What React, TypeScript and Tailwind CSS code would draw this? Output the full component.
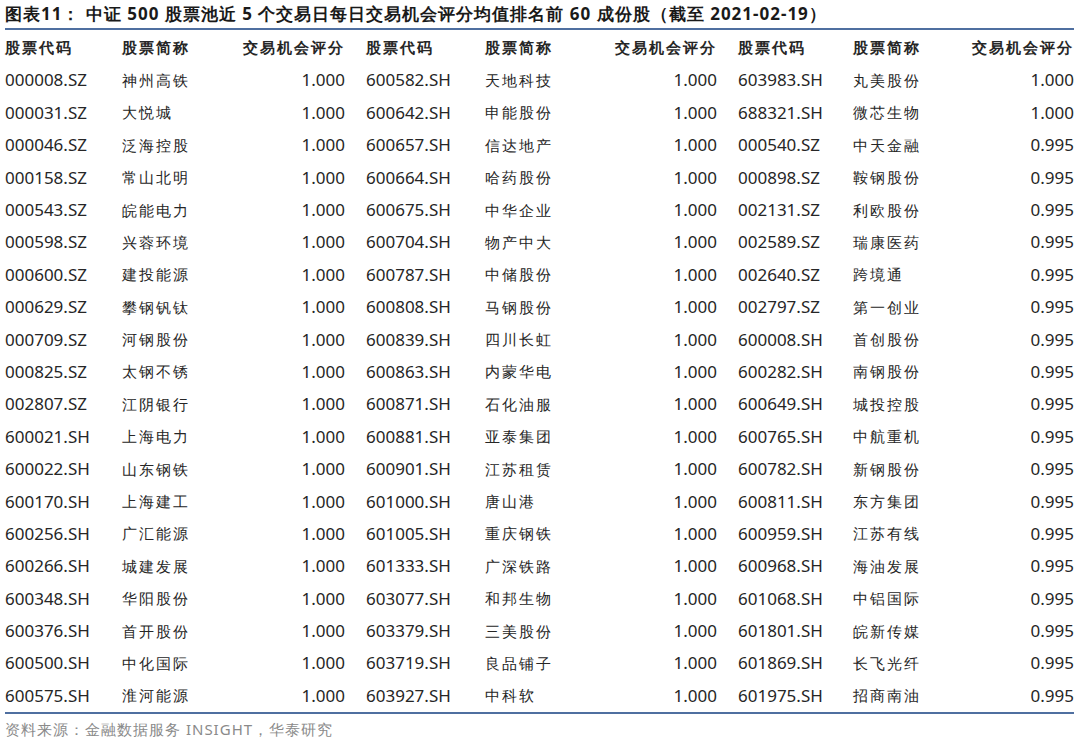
const rows: [string, string, string, string, string, string, string, string, string][] = [
  ["000008.SZ", "神州高铁", "1.000", "600582.SH", "天地科技", "1.000", "603983.SH", "丸美股份", "1.000"],
  ["000031.SZ", "大悦城", "1.000", "600642.SH", "申能股份", "1.000", "688321.SH", "微芯生物", "1.000"],
  ["000046.SZ", "泛海控股", "1.000", "600657.SH", "信达地产", "1.000", "000540.SZ", "中天金融", "0.995"],
  ["000158.SZ", "常山北明", "1.000", "600664.SH", "哈药股份", "1.000", "000898.SZ", "鞍钢股份", "0.995"],
  ["000543.SZ", "皖能电力", "1.000", "600675.SH", "中华企业", "1.000", "002131.SZ", "利欧股份", "0.995"],
  ["000598.SZ", "兴蓉环境", "1.000", "600704.SH", "物产中大", "1.000", "002589.SZ", "瑞康医药", "0.995"],
  ["000600.SZ", "建投能源", "1.000", "600787.SH", "中储股份", "1.000", "002640.SZ", "跨境通", "0.995"],
  ["000629.SZ", "攀钢钒钛", "1.000", "600808.SH", "马钢股份", "1.000", "002797.SZ", "第一创业", "0.995"],
  ["000709.SZ", "河钢股份", "1.000", "600839.SH", "四川长虹", "1.000", "600008.SH", "首创股份", "0.995"],
  ["000825.SZ", "太钢不锈", "1.000", "600863.SH", "内蒙华电", "1.000", "600282.SH", "南钢股份", "0.995"],
  ["002807.SZ", "江阴银行", "1.000", "600871.SH", "石化油服", "1.000", "600649.SH", "城投控股", "0.995"],
  ["600021.SH", "上海电力", "1.000", "600881.SH", "亚泰集团", "1.000", "600765.SH", "中航重机", "0.995"],
  ["600022.SH", "山东钢铁", "1.000", "600901.SH", "江苏租赁", "1.000", "600782.SH", "新钢股份", "0.995"],
  ["600170.SH", "上海建工", "1.000", "601000.SH", "唐山港", "1.000", "600811.SH", "东方集团", "0.995"],
  ["600256.SH", "广汇能源", "1.000", "601005.SH", "重庆钢铁", "1.000", "600959.SH", "江苏有线", "0.995"],
  ["600266.SH", "城建发展", "1.000", "601333.SH", "广深铁路", "1.000", "600968.SH", "海油发展", "0.995"],
  ["600348.SH", "华阳股份", "1.000", "603077.SH", "和邦生物", "1.000", "601068.SH", "中铝国际", "0.995"],
  ["600376.SH", "首开股份", "1.000", "603379.SH", "三美股份", "1.000", "601801.SH", "皖新传媒", "0.995"],
  ["600500.SH", "中化国际", "1.000", "603719.SH", "良品铺子", "1.000", "601869.SH", "长飞光纤", "0.995"],
  ["600575.SH", "淮河能源", "1.000", "603927.SH", "中科软", "1.000", "601975.SH", "招商南油", "0.995"],
];

const headers = ["股票代码", "股票简称", "交易机会评分", "股票代码", "股票简称", "交易机会评分", "股票代码", "股票简称", "交易机会评分"];

const grid =
  "grid grid-cols-[117px_105px_118px_140px_110px_122px_136px_105px_116px] items-center";
const cjk = "font-[family-name:'Noto_Sans_CJK_SC',serif] text-[15px] tracking-[2px]";
const num = "font-[family-name:'Liberation_Sans',sans-serif] text-[17px]";

function cellClass(i: number, head = false) {
  const pos = i % 3;
  const pad = i === 3 || i === 6 ? " pl-[21px]" : "";
  if (head) return `${cjk} font-bold${pos === 2 ? " text-right" : ""}${pad}`;
  if (pos === 1) return cjk;
  if (pos === 2) return `${num} text-right`;
  return `${num}${pad}`;
}

export default function App() {
  return (
    <div className="h-[743px] w-[1080px] bg-white pl-[5px] text-[#262626]">
      <div className="flex h-[30px] w-[1069px] items-end border-b-2 border-[#4f6fa0] pb-[2px] font-[family-name:'Liberation_Sans','Noto_Sans_CJK_SC',sans-serif] text-[17px] font-bold tracking-[1px] text-[#1a1a1a]">
        图表11：&nbsp;中证 500 股票池近 5 个交易日每日交易机会评分均值排名前 60 成份股（截至 2021-02-19）
      </div>
      <div className={`${grid} h-[34px]`}>
        {headers.map((h, i) => (
          <div key={i} className={cellClass(i, true)}>{h}</div>
        ))}
      </div>
      {rows.map((r, ri) => (
        <div key={ri} className={`${grid} h-[32.4px]`}>
          {r.map((c, i) => (
            <div key={i} className={cellClass(i)}>{c}</div>
          ))}
        </div>
      ))}
      <div className="w-[1069px] border-t-2 border-[#4f6fa0]" />
      <div className="mt-[4px] font-[family-name:'Liberation_Sans','Noto_Sans_CJK_SC',sans-serif] text-[15px] tracking-[1px] text-[#8a8a8a]">
        资料来源：金融数据服务 INSIGHT，华泰研究
      </div>
    </div>
  );
}
